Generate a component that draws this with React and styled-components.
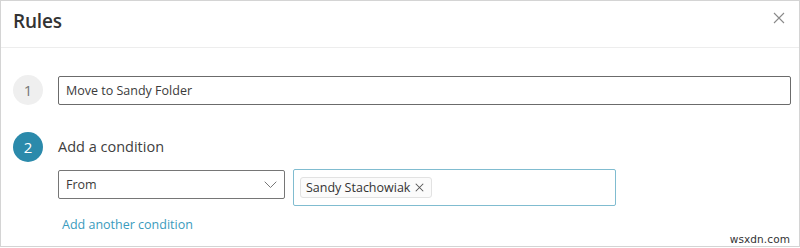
import React from "react";
import styled, { createGlobalStyle } from "styled-components";

const Global = createGlobalStyle`
  html, body { margin: 0; padding: 0; background: #fff; }
  body { font-family: "Open Sans", "Noto Sans", sans-serif; }
  * { box-sizing: border-box; }
`;

const Panel = styled.div`
  position: relative;
  width: 800px;
  height: 247px;
  border: 1px solid #d4d4d4;
  background: #fff;
  overflow: hidden;
`;

const Header = styled.div`
  height: 47px;
  border-bottom: 1px solid #ededed;
  display: flex;
  align-items: flex-start;
  justify-content: space-between;
  padding: 6px 12px 0 12px;
`;

const Title = styled.h1`
  margin: 0;
  font-size: 19px;
  font-weight: 600;
  color: #333;
  line-height: 28px;
  letter-spacing: -0.2px;
`;

const CloseButton = styled.button`
  border: 0;
  background: none;
  padding: 0;
  margin: 5px 2px 0 0;
  width: 12px;
  height: 12px;
  display: flex;
  cursor: pointer;
`;

const Body = styled.div`
  padding: 27px 0 0 12px;
  display: flex;
  flex-direction: column;
`;

const StepRow = styled.div`
  display: flex;
  align-items: center;
  gap: 15px;
  margin-top: ${(p) => p.$top || 0}px;
`;

const StepCircle = styled.div`
  width: 30px;
  height: 30px;
  border-radius: 50%;
  flex: none;
  display: flex;
  align-items: center;
  justify-content: center;
  font-size: 15px;
  background: ${(p) => (p.$active ? "#2b8aab" : "#efefef")};
  color: ${(p) => (p.$active ? "#fff" : "#777")};
`;

const NameInput = styled.input`
  width: 733px;
  height: 29px;
  border: 1px solid #6b6b6b;
  border-radius: 2px;
  padding: 0 7px;
  font-family: inherit;
  font-size: 12.5px;
  color: #3b3b3b;
  outline: none;
`;

const StepLabel = styled.div`
  font-size: 14.5px;
  color: #404040;
  line-height: 20px;
`;

const ConditionRow = styled.div`
  display: flex;
  align-items: flex-start;
  gap: 8px;
  margin: 7px 0 0 45px;
`;

const Dropdown = styled.div`
  width: 227px;
  height: 29px;
  margin-top: 1px;
  border: 1px solid #767676;
  border-radius: 2px;
  display: flex;
  align-items: center;
  justify-content: space-between;
  padding: 0 7px 0 7px;
  font-size: 12.5px;
  color: #3b3b3b;
`;

const TagField = styled.div`
  width: 323px;
  height: 37px;
  border: 1.5px solid #80bcd0;
  border-radius: 2px;
  display: flex;
  align-items: center;
  padding: 0 6px;
`;

const Chip = styled.div`
  height: 21px;
  display: flex;
  align-items: center;
  gap: 5px;
  padding: 0 7px 0 5px;
  border: 1px solid #e2e2e2;
  border-radius: 3px;
  background: #fbfbfb;
  font-size: 12.5px;
  color: #333;
`;

const ChipRemove = styled.span`
  display: flex;
  width: 9px;
  height: 9px;
`;

const AddLink = styled.a`
  margin: 10px 0 0 49px;
  font-size: 12.5px;
  color: #3a9bbd;
  text-decoration: none;
  line-height: 18px;
  cursor: pointer;
`;

const Watermark = styled.div`
  position: absolute;
  right: 9px;
  bottom: 1px;
  font-family: "DejaVu Sans", sans-serif;
  font-size: 10.5px;
  color: #333;
  letter-spacing: 0.1px;
`;

const XIcon = ({ size, color, width }) => (
  <svg width={size} height={size} viewBox="0 0 12 12">
    <path d="M1 1L11 11M11 1L1 11" stroke={color} strokeWidth={width} fill="none" />
  </svg>
);

const Chevron = () => (
  <svg width="13" height="8" viewBox="0 0 13 8">
    <path d="M0.7 0.7L6.5 6.5L12.3 0.7" stroke="#777" strokeWidth="1" fill="none" />
  </svg>
);

export default function App() {
  return (
    <>
      <Global />
      <Panel>
        <Header>
          <Title>Rules</Title>
          <CloseButton aria-label="Close">
            <XIcon size={12} color="#8a8a8a" width={1.1} />
          </CloseButton>
        </Header>
        <Body>
          <StepRow>
            <StepCircle>1</StepCircle>
            <NameInput defaultValue="Move to Sandy Folder" />
          </StepRow>
          <StepRow $top={27}>
            <StepCircle $active>2</StepCircle>
            <StepLabel>Add a condition</StepLabel>
          </StepRow>
          <ConditionRow>
            <Dropdown>
              <span>From</span>
              <Chevron />
            </Dropdown>
            <TagField>
              <Chip>
                <span>Sandy Stachowiak</span>
                <ChipRemove>
                  <XIcon size={9} color="#555" width={1.4} />
                </ChipRemove>
              </Chip>
            </TagField>
          </ConditionRow>
          <AddLink>Add another condition</AddLink>
        </Body>
        <Watermark>wsxdn.com</Watermark>
      </Panel>
    </>
  );
}
